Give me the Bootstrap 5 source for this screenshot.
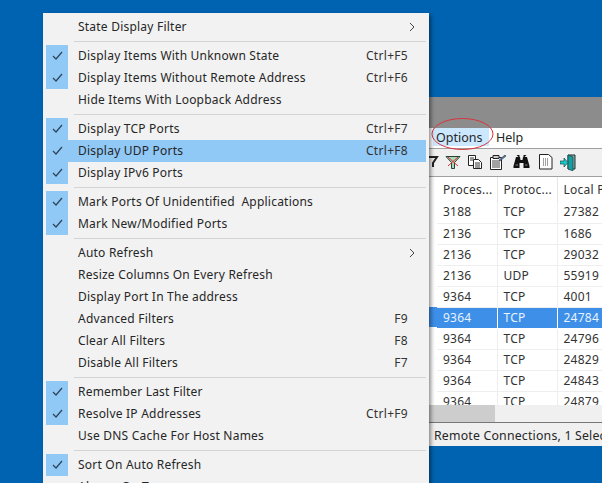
<!DOCTYPE html>
<html lang="en">
<head>
<meta charset="utf-8">
<title>Port viewer options menu</title>
<link href="https://cdn.jsdelivr.net/npm/bootstrap@5.3.0/dist/css/bootstrap.min.css" rel="stylesheet">
<style>
html,body{height:483px;overflow:hidden}
body{background:#0063b1;font-family:"Noto Sans","Open Sans",sans-serif;font-size:12px;color:#262626;position:relative}
.app-win{position:absolute;left:429px;top:97px;width:173px;height:349px;background:#fff;overflow:hidden}
.title-strip{height:31px;background:#8c8c8c}
.menu-strip{height:21px;border-bottom:1px solid #a0a0a0;font-size:12.500px}
.opt-item{margin-left:4px;width:56px;height:18px;background:#cce8ff;padding-left:3px;line-height:19px}
.help-item{margin-left:7px;line-height:19px}
.tool-strip{height:28px;background:#f0f0f0;border-bottom:1px solid #a0a0a0;position:relative}
.tool-strip svg{position:absolute;top:4px}
.grid-wrap{height:228px;overflow:hidden}
.port-grid{border-collapse:collapse;table-layout:fixed;width:200px;margin-left:8px;font-size:12px;letter-spacing:.25px;color:#333}
.port-grid th{font-weight:400;height:25px;padding:0 0 0 6px;border-right:1px solid #e5e5e5;white-space:nowrap;overflow:hidden}
.port-grid td{height:21px;padding:0 0 0 6px;border-right:1px solid #eee;border-bottom:1px solid #eee;white-space:nowrap}
.port-grid tr.sel td{background:#3d8fe8;color:#e8f3ff;border-right:1px solid #fff;border-bottom:1px solid #fff}
.sel-lead{position:absolute;left:0;top:130px;width:8px;height:20px;background:#3d8fe8}
.hscroll{height:17px;background:#f0f0f0}
.hthumb{width:66px;height:17px;background:#cdcdcd}
.status-strip{height:24px;border-top:1px solid #777;background:#f0f0f0;padding-left:5px;line-height:25px;white-space:nowrap;font-size:12.300px;letter-spacing:.2px}
.pop-menu{position:absolute;left:43px;top:13px;width:386px;height:490px;background:#f2f2f2;padding:3px 3px 0;box-shadow:2px 2px 4px rgba(0,0,0,.45);letter-spacing:.22px}
.pop-row{height:22px;line-height:22px;padding-left:32px;padding-right:18px;position:relative;white-space:nowrap}
.pop-row.hot{background:#90c8f6}
.pop-row.on::before{content:"";position:absolute;left:0;top:0;width:22px;height:22px;background:#90c8f6}
.pop-row svg.tick{position:absolute;left:6px;top:6px;z-index:1}
.pop-row svg.arrow{position:absolute;right:11px;top:6px}
.pop-sep{height:7px;padding-top:3px;margin-left:28px}
.pop-sep hr{margin:0;border-top:1px solid #d4d4d4;opacity:1}
.key{letter-spacing:.3px;color:#333}
.note-ring{position:absolute;left:430px;top:116px}
</style>
</head>
<body>
<div class="app-win d-flex flex-column">
  <div class="title-strip"></div>
  <div class="menu-strip d-flex"><span class="opt-item">Options</span><span class="help-item">Help</span></div>
  <div class="tool-strip">
    <svg style="left:-4px" width="14" height="16" viewBox="0 0 14 16"><path d="M1 4h11L8 10v4" fill="none" stroke="#222" stroke-width="2"/></svg>
    <svg style="left:16px" width="16" height="17" viewBox="0 0 16 17"><path d="M1 3.500h14L9.500 9.500v6h-3v-6z" fill="#a9d8bd" stroke="#243" stroke-width="1"/><path d="M3 4l10 9M13 4L3 13" stroke="#e43030" stroke-width="1"/></svg>
    <svg style="left:38px" width="16" height="17" viewBox="0 0 16 17"><path d="M1.500 2.500h7v10h-7z" fill="#fff" stroke="#222"/><path d="M6.500 6.500h5l3 3v6h-8z" fill="#fff" stroke="#222"/><path d="M3 5h4M3 7h3M8 10h5M8 12h5M8 14h5" stroke="#333"/></svg>
    <svg style="left:60px" width="18" height="17" viewBox="0 0 18 17"><path d="M1.500 4.500h11v12h-11z" fill="#fff" stroke="#222"/><path d="M4 2.500h6v3H4z" fill="#ccc" stroke="#222"/><path d="M3 8h8M3 10h8M3 12h8M3 14h8" stroke="#444"/><path d="M10 7l6-5 1 1-6 5z" fill="#5f7fb0" stroke="#234" stroke-width=".6"/></svg>
    <svg style="left:84px" width="17" height="17" viewBox="0 0 17 17"><path d="M3.500 2h3v2h-1zM10.500 4h1l2-2h-3zM3 4h4l.5 3h2L10 4h4l2.500 9v2h-6V10H6.500v5h-6v-2z" fill="#111"/><path d="M2.500 12h2.500M12 12h2.500" stroke="#888"/></svg>
    <svg style="left:110px" width="14" height="17" viewBox="0 0 14 17"><path d="M.500 1.500h9l3.500 3v11.500H.5z" fill="#fff" stroke="#222"/><path d="M4 6h1M6 6h1M8 6h1M4 8h1M6 8h1M8 8h1M4 10h1M6 10h1M8 10h1M4 12h1M6 12h1M8 12h1" stroke="#444"/></svg>
    <svg style="left:131px" width="16" height="18" viewBox="0 0 16 18"><path d="M8 2h7v14H8z" fill="#9aa" stroke="#133"/><path d="M8 2l5 2v14l-5-2z" fill="#14a0a0" stroke="#133" stroke-width=".6"/><path d="M0 8h4V5l4 4.500-4 4.500v-3H0z" fill="#18c8c8" stroke="#133" stroke-width=".6"/></svg>
  </div>
  <div class="grid-wrap position-relative">
    <div class="sel-lead"></div>
    <table class="port-grid">
      <colgroup><col style="width:60px"><col style="width:60px"><col style="width:80px"></colgroup>
      <thead><tr><th>Proces...</th><th>Protoc...</th><th>Local P</th></tr></thead>
      <tbody>
        <tr><td>3188</td><td>TCP</td><td>27382</td></tr>
        <tr><td>2136</td><td>TCP</td><td>1686</td></tr>
        <tr><td>2136</td><td>TCP</td><td>29032</td></tr>
        <tr><td>2136</td><td>UDP</td><td>55919</td></tr>
        <tr><td>9364</td><td>TCP</td><td>4001</td></tr>
        <tr class="sel"><td>9364</td><td>TCP</td><td>24784</td></tr>
        <tr><td>9364</td><td>TCP</td><td>24796</td></tr>
        <tr><td>9364</td><td>TCP</td><td>24829</td></tr>
        <tr><td>9364</td><td>TCP</td><td>24843</td></tr>
        <tr><td>9364</td><td>TCP</td><td>24879</td></tr>
      </tbody>
    </table>
  </div>
  <div class="hscroll"><div class="hthumb"></div></div>
  <div class="status-strip">Remote Connections, 1 Selected</div>
</div>

<svg class="note-ring" width="66" height="36" viewBox="0 0 66 36"><ellipse cx="32.500" cy="18" rx="30.500" ry="15.500" fill="none" stroke="#d8343c" stroke-width="1"/></svg>

<div class="pop-menu">
  <div class="pop-row d-flex justify-content-between"><span>State Display Filter</span><svg class="arrow" width="6" height="10" viewBox="0 0 6 10"><path d="M1 1l4 4-4 4" fill="none" stroke="#444"/></svg></div>
  <div class="pop-sep"><hr></div>
  <div class="pop-row on d-flex justify-content-between"><svg class="tick" width="11" height="10" viewBox="0 0 11 10"><path d="M1 5l3 3 6-7" fill="none" stroke="#2f4358" stroke-width="1.200"/></svg><span>Display Items With Unknown State</span><span class="key">Ctrl+F5</span></div>
  <div class="pop-row on d-flex justify-content-between"><svg class="tick" width="11" height="10" viewBox="0 0 11 10"><path d="M1 5l3 3 6-7" fill="none" stroke="#2f4358" stroke-width="1.200"/></svg><span>Display Items Without Remote Address</span><span class="key">Ctrl+F6</span></div>
  <div class="pop-row"><span>Hide Items With Loopback Address</span></div>
  <div class="pop-sep"><hr></div>
  <div class="pop-row on d-flex justify-content-between"><svg class="tick" width="11" height="10" viewBox="0 0 11 10"><path d="M1 5l3 3 6-7" fill="none" stroke="#2f4358" stroke-width="1.200"/></svg><span>Display TCP Ports</span><span class="key">Ctrl+F7</span></div>
  <div class="pop-row on hot d-flex justify-content-between"><svg class="tick" width="11" height="10" viewBox="0 0 11 10"><path d="M1 5l3 3 6-7" fill="none" stroke="#2f4358" stroke-width="1.200"/></svg><span>Display UDP Ports</span><span class="key">Ctrl+F8</span></div>
  <div class="pop-row on"><svg class="tick" width="11" height="10" viewBox="0 0 11 10"><path d="M1 5l3 3 6-7" fill="none" stroke="#2f4358" stroke-width="1.200"/></svg><span>Display IPv6 Ports</span></div>
  <div class="pop-sep"><hr></div>
  <div class="pop-row on"><svg class="tick" width="11" height="10" viewBox="0 0 11 10"><path d="M1 5l3 3 6-7" fill="none" stroke="#2f4358" stroke-width="1.200"/></svg><span>Mark Ports Of Unidentified&nbsp; Applications</span></div>
  <div class="pop-row on"><svg class="tick" width="11" height="10" viewBox="0 0 11 10"><path d="M1 5l3 3 6-7" fill="none" stroke="#2f4358" stroke-width="1.200"/></svg><span>Mark New/Modified Ports</span></div>
  <div class="pop-sep"><hr></div>
  <div class="pop-row d-flex justify-content-between"><span>Auto Refresh</span><svg class="arrow" width="6" height="10" viewBox="0 0 6 10"><path d="M1 1l4 4-4 4" fill="none" stroke="#444"/></svg></div>
  <div class="pop-row"><span>Resize Columns On Every Refresh</span></div>
  <div class="pop-row"><span>Display Port In The address</span></div>
  <div class="pop-row d-flex justify-content-between"><span>Advanced Filters</span><span class="key">F9</span></div>
  <div class="pop-row d-flex justify-content-between"><span>Clear All Filters</span><span class="key">F8</span></div>
  <div class="pop-row d-flex justify-content-between"><span>Disable All Filters</span><span class="key">F7</span></div>
  <div class="pop-sep"><hr></div>
  <div class="pop-row on"><svg class="tick" width="11" height="10" viewBox="0 0 11 10"><path d="M1 5l3 3 6-7" fill="none" stroke="#2f4358" stroke-width="1.200"/></svg><span>Remember Last Filter</span></div>
  <div class="pop-row on d-flex justify-content-between"><svg class="tick" width="11" height="10" viewBox="0 0 11 10"><path d="M1 5l3 3 6-7" fill="none" stroke="#2f4358" stroke-width="1.200"/></svg><span>Resolve IP Addresses</span><span class="key">Ctrl+F9</span></div>
  <div class="pop-row"><span>Use DNS Cache For Host Names</span></div>
  <div class="pop-sep"><hr></div>
  <div class="pop-row on"><svg class="tick" width="11" height="10" viewBox="0 0 11 10"><path d="M1 5l3 3 6-7" fill="none" stroke="#2f4358" stroke-width="1.200"/></svg><span>Sort On Auto Refresh</span></div>
  <div class="pop-row"><span>Always On Top</span></div>
</div>
<script src="https://cdn.jsdelivr.net/npm/bootstrap@5.3.0/dist/js/bootstrap.bundle.min.js"></script>
</body>
</html>
